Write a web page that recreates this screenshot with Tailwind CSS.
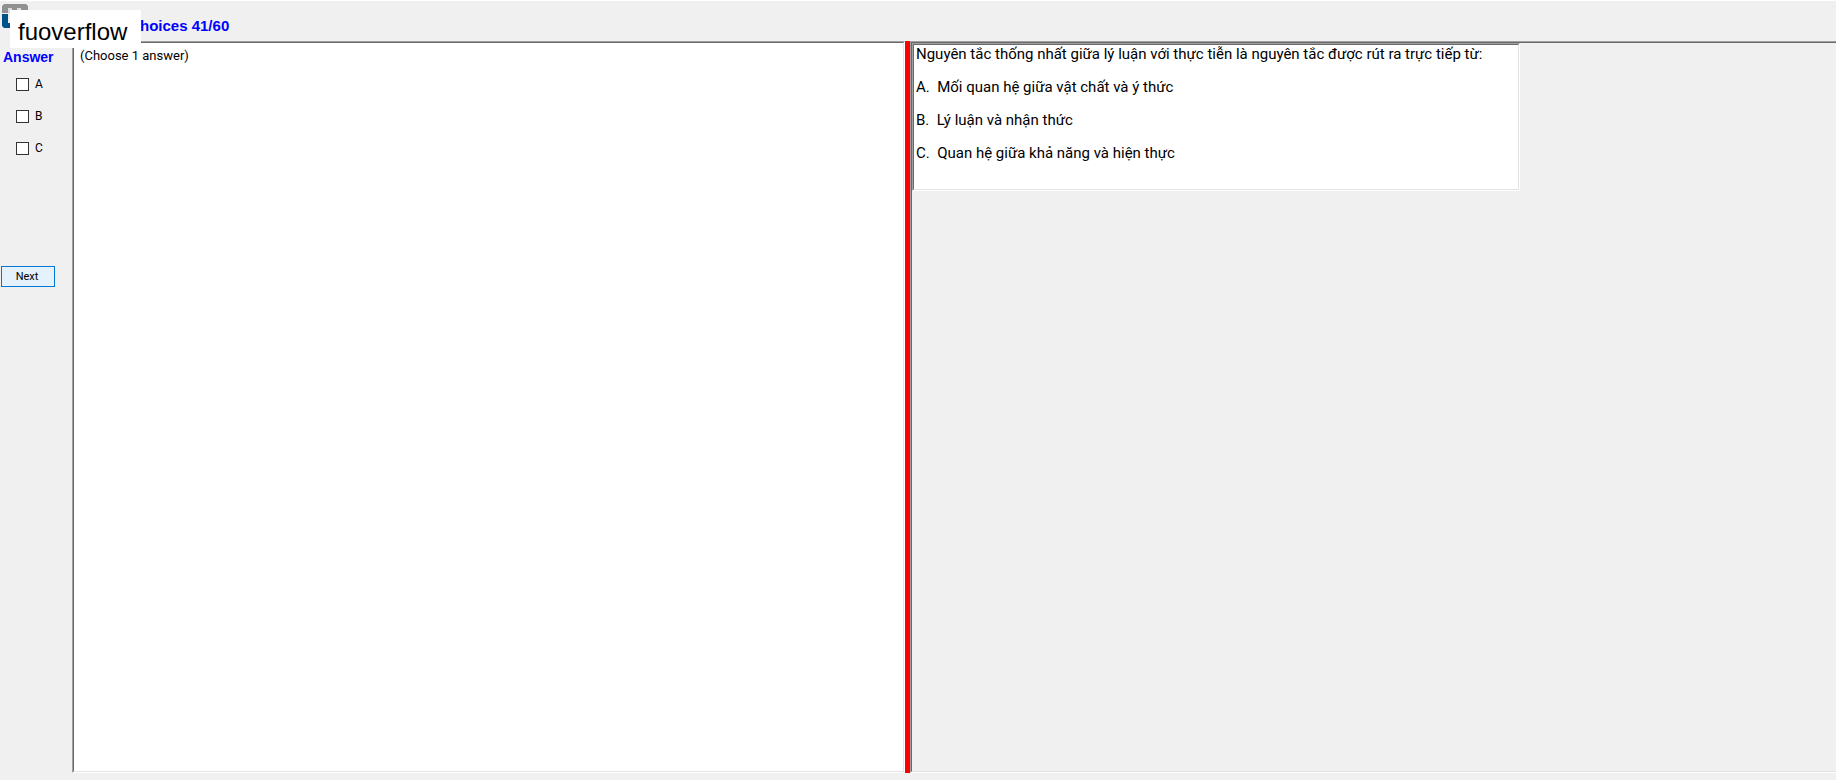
<!DOCTYPE html>
<html lang="vi">

<head>
    <meta charset="UTF-8">
    <meta name="viewport" content="width=device-width, initial-scale=1.0">
    <title>Multiple choices</title>
    <script src="https://cdn.jsdelivr.net/npm/@tailwindcss/browser@4"></script>
</head>

<body class="bg-[#f0f0f0] text-black font-['Liberation_Sans',Arial,sans-serif]">
    <div class="relative flex flex-col h-screen overflow-hidden border-t border-white pb-[7px]">

        <!-- Header -->
        <header class="flex h-10 shrink-0 items-start pl-[2px] pt-[2px]">
            <svg class="w-[26px] h-[25px] shrink-0" viewBox="0 0 26 25" aria-hidden="true">
                <path d="M2 1H24L26 3V10H19V5H15V10H10V5H6V10H0V3Z" fill="#919191" />
                <path d="M6 5H10V10H6ZM15 5H19V10H15Z" fill="#d9dde0" />
                <path d="M0 11H6V20H12V25H2L0 23Z" fill="#00528a" />
            </svg>
            <h1 class="pl-28 pt-[15px] text-[15px] leading-[16px] font-bold text-[#0000ff] whitespace-nowrap">hoices 41/60</h1>
        </header>

        <!-- Watermark label -->
        <div class="absolute left-[10px] top-[9px] z-10 h-[38px] w-[131px] bg-white pl-2 text-2xl leading-[44px]">fuoverflow</div>

        <main class="flex flex-1 min-h-0">
            <!-- Answer column -->
            <form class="flex w-[72px] shrink-0 flex-col">
                <fieldset class="h-[225px]">
                    <legend class="pl-[3px] pt-2 text-[14px] leading-[16px] font-bold text-[#0000ff]">Answer</legend>
                    <div class="flex flex-col gap-4 pl-4 pt-[11px] font-[Roboto,sans-serif] text-[12px] leading-[16px]">
                        <label class="flex items-center gap-[6px]">
                            <input type="checkbox" name="answer" value="A" class="size-[13px] appearance-none border border-[#333333] bg-white checked:bg-[#0078d7]">A
                        </label>
                        <label class="flex items-center gap-[6px]">
                            <input type="checkbox" name="answer" value="B" class="size-[13px] appearance-none border border-[#333333] bg-white checked:bg-[#0078d7]">B
                        </label>
                        <label class="flex items-center gap-[6px]">
                            <input type="checkbox" name="answer" value="C" class="size-[13px] appearance-none border border-[#333333] bg-white checked:bg-[#0078d7]">C
                        </label>
                    </div>
                </fieldset>
                <button type="button" class="ml-px h-[21px] w-[54px] border border-[#0078d7] bg-[#e5f1fb] font-[Roboto,sans-serif] text-[11px] leading-[16px] pr-[2px]">Next</button>
            </form>

            <!-- Answer hint pane -->
            <section class="flex w-[833px] shrink border border-t-[#a0a0a0] border-l-[#a0a0a0] border-r-white border-b-white">
                <div class="flex-1 border border-t-[#696969] border-l-[#696969] border-r-[#e3e3e3] border-b-[#e3e3e3] bg-white pl-[6px] pt-1">
                    <p class="font-[Roboto,sans-serif] text-[13px] leading-[17px]">(Choose 1 answer)</p>
                </div>
            </section>

            <div class="w-[5px] shrink-0 bg-[#ff0000]"></div>

            <!-- Question pane -->
            <section class="flex flex-1 border border-r-0 border-t-[#a0a0a0] border-l-[#a0a0a0] border-b-white">
                <div class="flex-1 border border-r-0 border-t-[#696969] border-l-[#696969] border-b-[#e3e3e3]">
                    <div class="max-w-[608px] border border-t-[#a0a0a0] border-l-[#a0a0a0] border-r-white border-b-white">
                        <div class="border border-t-[#696969] border-l-[#696969] border-r-[#e3e3e3] border-b-[#e3e3e3] bg-white pl-[2px] pt-px pb-[27px] font-[Roboto,sans-serif] text-[15px] leading-[17px]">
                            <p>Nguyên tắc thống nhất giữa lý luận với thực tiễn là nguyên tắc được rút ra trực tiếp từ:</p>
                            <p class="mt-4 whitespace-pre">A.  Mối quan hệ giữa vật chất và ý thức</p>
                            <p class="mt-4 whitespace-pre">B.  Lý luận và nhận thức</p>
                            <p class="mt-4 whitespace-pre">C.  Quan hệ giữa khả năng và hiện thực</p>
                        </div>
                    </div>
                </div>
            </section>
        </main>
    </div>
</body>

</html>
